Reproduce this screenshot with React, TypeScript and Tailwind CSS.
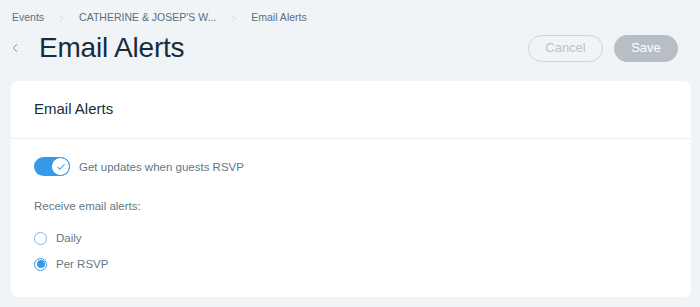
import { Check, ChevronLeft, ChevronRight } from "lucide-react";

const crumbs = ["Events", "CATHERINE & JOSEP'S W...", "Email Alerts"];

export default function App() {
  return (
    <div
      className="w-[700px] h-[307px] bg-[#f0f4f7] overflow-hidden"
      style={{ fontFamily: '"Liberation Sans", Arial, sans-serif' }}
    >
      {/* Breadcrumbs */}
      <div className="flex items-center h-[36px] pl-[12px] text-[10.5px] text-[#5c6e7c]">
        {crumbs.map((c, i) => (
          <div key={c} className="flex items-center">
            {i > 0 && (
              <ChevronRight className="w-[13px] h-[13px] mx-[11px] text-[#c4ccd3]" strokeWidth={1.2} />
            )}
            <span>{c}</span>
          </div>
        ))}
      </div>

      {/* Header */}
      <div className="flex items-center h-[24px] pl-[8px] pr-[22px]">
        <ChevronLeft className="w-[14px] h-[14px] text-[#3899ec]" strokeWidth={1.6} />
        <h1 className="ml-[17px] text-[28px] leading-none text-[#162d3d] tracking-[-0.2px]">Email Alerts</h1>
        <div className="ml-auto flex items-center gap-[11px]">
          <button className="w-[75px] h-[27px] rounded-full border border-[#cfd5da] text-[13px] text-[#bcc3c9]">
            Cancel
          </button>
          <button className="w-[64px] h-[27px] rounded-full bg-[#b7bec5] text-[13px] text-white">
            Save
          </button>
        </div>
      </div>

      {/* Card */}
      <div className="mt-[21px] mx-[11px] w-[680px] h-[216px] bg-white rounded-[8px]">
        <div className="h-[58px] flex items-center px-[23px] border-b border-[#eceff2] text-[15px] text-[#162d3d]">
          Email Alerts
        </div>
        <div className="px-[23px] pt-[18px] text-[11.5px] leading-[16px] text-[#667683]">
          <div className="flex items-center">
            <div className="relative w-[36px] h-[19px] rounded-full bg-[#3899ec]">
              <div className="absolute right-[0px] top-[0px] w-[19px] h-[19px] rounded-full bg-white border border-[#3899ec] flex items-center justify-center">
                <Check className="w-[10px] h-[10px] text-[#3899ec]" strokeWidth={2.5} />
              </div>
            </div>
            <span className="ml-[9px]">Get updates when guests RSVP</span>
          </div>
          <div className="mt-[22px]">Receive email alerts:</div>
          <div className="mt-[16px] flex items-center">
            <div className="w-[13px] h-[13px] rounded-full border border-[#7fb9f0] bg-white" />
            <span className="ml-[9px]">Daily</span>
          </div>
          <div className="mt-[10px] flex items-center">
            <div className="w-[13px] h-[13px] rounded-full border border-[#3899ec] bg-white flex items-center justify-center">
              <div className="w-[8px] h-[8px] rounded-full bg-[#3899ec]" />
            </div>
            <span className="ml-[9px]">Per RSVP</span>
          </div>
        </div>
      </div>
    </div>
  );
}
